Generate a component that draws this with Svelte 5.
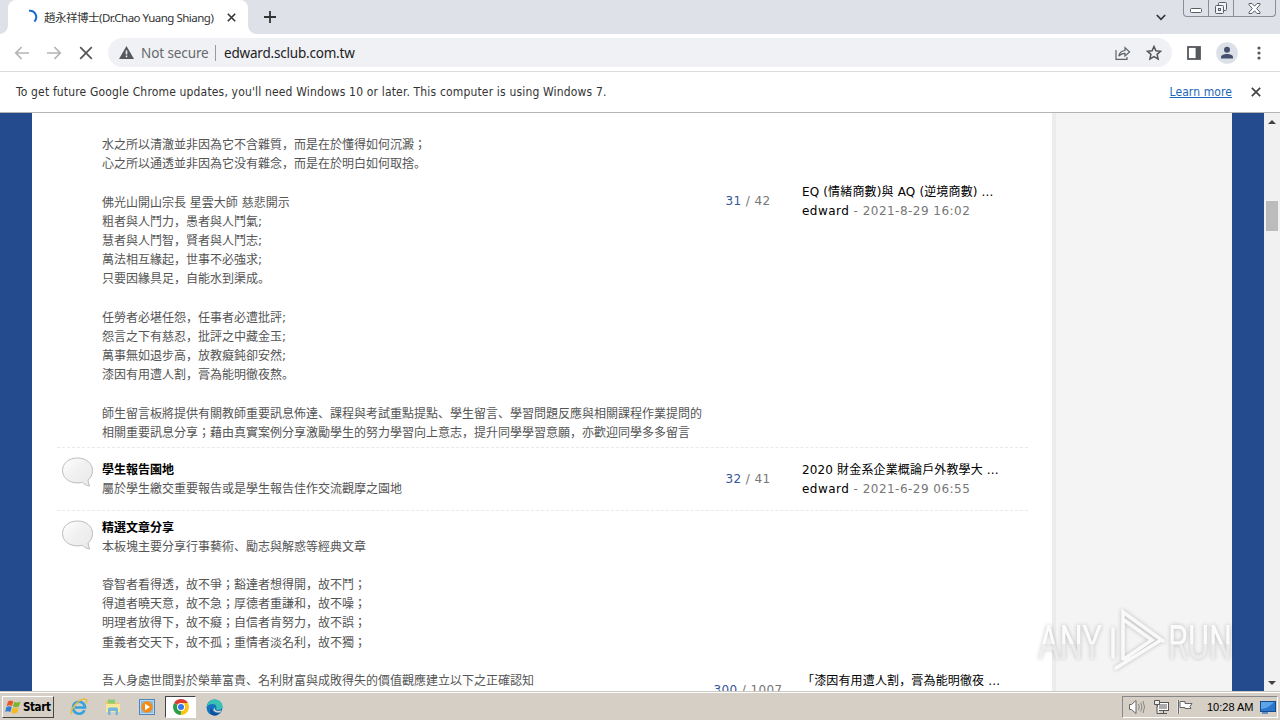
<script>
  const quote = [
    '水之所以清澈並非因為它不含雜質，而是在於懂得如何沉澱；',
    '心之所以通透並非因為它没有雜念，而是在於明白如何取捨。',
    '',
    '佛光山開山宗長 星雲大師 慈悲開示',
    '粗者與人鬥力，愚者與人鬥氣;',
    '慧者與人鬥智，賢者與人鬥志;',
    '萬法相互緣起，世事不必強求;',
    '只要因緣具足，自能水到渠成。',
    '',
    '任勞者必堪任怨，任事者必遭批評;',
    '怨言之下有慈忍，批評之中藏金玉;',
    '萬事無如退步高，放教癡鈍卻安然;',
    '漆因有用遭人割，膏為能明徹夜熬。',
    '',
    '師生留言板將提供有關教師重要訊息佈達、課程與考試重點提點、學生留言、學習問題反應與相關課程作業提問的',
    '相關重要訊息分享；藉由真實案例分享激勵學生的努力學習向上意志，提升同學學習意願，亦歡迎同學多多留言'
  ];

  const forums = [
    {
      kind: 'first',
      title: '',
      lines: quote,
      topics: '31',
      posts: '42',
      last: 'EQ (情緒商數)與 AQ (逆境商數) ...',
      user: 'edward',
      date: '2021-8-29 16:02'
    },
    {
      kind: 'short',
      title: '學生報告園地',
      lines: ['屬於學生繳交重要報告或是學生報告佳作交流觀摩之園地'],
      topics: '32',
      posts: '41',
      last: '2020 財金系企業概論戶外教學大 ...',
      user: 'edward',
      date: '2021-6-29 06:55'
    },
    {
      kind: 'long',
      title: '精選文章分享',
      lines: [
        '本板塊主要分享行事藝術、勵志與解惑等經典文章',
        '',
        '睿智者看得透，故不爭；豁達者想得開，故不鬥；',
        '得道者曉天意，故不急；厚德者重謙和，故不噪；',
        '明理者放得下，故不癡；自信者肯努力，故不誤；',
        '重義者交天下，故不孤；重情者淡名利，故不獨；',
        '',
        '吾人身處世間對於榮華富貴、名利財富與成敗得失的價值觀應建立以下之正確認知'
      ],
      topics: '300',
      posts: '1007',
      last: '「漆因有用遭人割，膏為能明徹夜 ...',
      user: '',
      date: ''
    }
  ];
</script>

<div class="screen">
  <header class="tabs">
    <div class="tab">
      <svg class="spinner" width="16" height="16" viewBox="0 0 16 16">
        <path d="M7 1.8A6.400 6.400 0 0 1 12.400 12.600" fill="none" stroke="#1a6bd0" stroke-width="2" />
      </svg>
      <span class="tab-title">趙永祥博士(Dr.Chao Yuang Shiang)</span>
      <svg width="9" height="9" viewBox="0 0 9 9"><path d="M.8.8l7.4 7.4M8.2.8L.8 8.2" stroke="#333" stroke-width="1.6" /></svg>
    </div>
    <svg class="plus" width="12" height="12" viewBox="0 0 12 12"><path d="M6 0v12M0 6h12" stroke="#333" stroke-width="1.8" /></svg>
    <svg class="chevron" width="10" height="7" viewBox="0 0 10 7"><path d="M.8 1l4.2 4.3L9.2 1" fill="none" stroke="#333" stroke-width="1.7" /></svg>
    <div class="caption">
      <span class="min"><svg width="12" height="5" viewBox="0 0 12 5"><rect x=".5" y=".5" width="11" height="4" rx="1" fill="#fff" stroke="#595d66" /></svg></span>
      <span class="max">
        <svg width="14" height="14" viewBox="0 0 14 14" fill="#f1f3f6" stroke="#595d66">
          <rect x="4.5" y="1.5" width="8" height="8" rx="1" />
          <rect x="1.5" y="4.5" width="8" height="8" rx="1" />
          <rect x="4.5" y="7.5" width="2" height="2" />
        </svg>
      </span>
      <span class="shut">
        <svg width="13" height="11" viewBox="0 0 13 11"><path d="M1 .5h3l2.5 2.7L9 .5h3v1.3L8.6 5.5 12 9.2v1.3H9L6.5 7.8 4 10.5H1V9.2l3.4-3.7L1 1.8z" fill="#fff" stroke="#595d66" /></svg>
      </span>
    </div>
  </header>

  <div class="toolbar">
    <svg width="16" height="14" viewBox="0 0 16 14"><path d="M15 7H2M7.6 1L1.8 7l5.8 6" fill="none" stroke="#b4b4b6" stroke-width="1.7" /></svg>
    <svg width="16" height="14" viewBox="0 0 16 14"><path d="M1 7h13M8.4 1l5.8 6-5.8 6" fill="none" stroke="#b4b4b6" stroke-width="1.7" /></svg>
    <svg class="stop" width="14" height="14" viewBox="0 0 14 14"><path d="M1.2 1.2l11.6 11.6M12.8 1.2L1.2 12.8" stroke="#555" stroke-width="1.7" /></svg>
    <div class="omnibox">
      <svg width="15" height="13" viewBox="0 0 15 13"><path d="M7.5 0L15 13H0z" fill="#55585c" /><path d="M7.5 4.6v3.8M7.5 9.6v1.7" stroke="#eff1f4" stroke-width="1.6" /></svg>
      <span class="insecure">Not secure</span>
      <span class="divider"></span>
      <span class="address">edward.sclub.com.tw</span>
      <svg class="share" width="16" height="14" viewBox="0 0 16 14" fill="none" stroke="#5f6368" stroke-width="1.2">
        <path d="M1 4v9.3h11V11" />
        <path d="M3.8 10.2C4.4 6.6 6.5 4.7 10 4.5V1.6L14.6 6 10 10V7.3c-3 0-4.8.8-6.2 2.9z" />
      </svg>
      <svg width="16" height="16" viewBox="0 0 14 14"><path d="M7 1.3l1.7 3.8 4.1.4-3.1 2.7.9 4.1L7 10.2l-3.6 2.1.9-4.1L1.2 5.5l4.1-.4z" fill="none" stroke="#505357" stroke-width="1.300" /></svg>
    </div>
    <svg class="panel" width="14" height="14" viewBox="0 0 14 14"><rect x="1" y="1" width="12" height="12" fill="#fff" stroke="#55585c" stroke-width="1.8" /><path d="M8.6 1H13v12H8.6z" fill="#55585c" /></svg>
    <svg class="avatar" width="22" height="22" viewBox="0 0 22 22"><circle cx="11" cy="11" r="10.8" fill="#dce0e7" /><circle cx="11" cy="7.8" r="3" fill="#44516e" /><path d="M5 16.5v-1.4c0-2 3-3.1 6-3.1s6 1.1 6 3.1v1.4z" fill="#44516e" /></svg>
    <svg class="dots" width="4" height="14" viewBox="0 0 4 14" fill="#55585c"><circle cx="2" cy="2" r="1.6" /><circle cx="2" cy="7" r="1.6" /><circle cx="2" cy="12" r="1.6" /></svg>
  </div>

  <div class="infobar">
    <span class="notice">To get future Google Chrome updates, you'll need Windows 10 or later. This computer is using Windows 7.</span>
    <span class="learn">Learn more</span>
    <svg width="10" height="10" viewBox="0 0 10 10"><path d="M.8.8l8.4 8.4M9.2.8L.8 9.2" stroke="#444" stroke-width="1.7" /></svg>
  </div>

  <div class="viewport">
    <main>
      <div class="board">
        {#each forums as forum}
          <section class="forum {forum.kind}">
            <div class="icon">
              {#if forum.title}
                <svg width="34" height="31" viewBox="0 0 34 31">
                  <defs>
                    <linearGradient id={`bubble-${forum.kind}`} x1="0" y1="0" x2="1" y2="1">
                      <stop offset="0" stop-color="#fff" />
                      <stop offset=".45" stop-color="#f1f1f1" />
                      <stop offset="1" stop-color="#e9e9e9" />
                    </linearGradient>
                  </defs>
                  <path d="M16.500 1C25.500 1 31.500 6.500 31.500 13.500c0 4-1.700 7.300-4.500 9.500.2 2 .6 4 1.600 6-3-.5-5.400-1.600-7.100-3.700-1.600.4-3.200.6-5 .6C7.500 25.900 1.500 20.500 1.500 13.500S7.500 1 16.500 1z" fill={`url(#bubble-${forum.kind})`} stroke="#bcbcbc" />
                </svg>
              {/if}
            </div>
            <div class="body">
              {#if forum.title}<h2>{forum.title}</h2>{/if}
              {#each forum.lines as line}
                <p>{line}</p>
              {/each}
            </div>
            <div class="count"><a href="#topics">{forum.topics}</a> / {forum.posts}</div>
            <div class="last">
              <p class="subject">{forum.last}</p>
              <p>{#if forum.user}<b>{forum.user}</b> - {forum.date}{/if}</p>
            </div>
          </section>
        {/each}
      </div>
    </main>
    <aside></aside>
    <div class="scrollbar">
      <svg width="8" height="4" viewBox="0 0 8 4"><path d="M0 4l4-4 4 4z" fill="#404040" /></svg>
      <span class="thumb"></span>
      <svg class="down" width="8" height="4" viewBox="0 0 8 4"><path d="M0 0l4 4 4-4z" fill="#404040" /></svg>
    </div>
  </div>

  <footer class="taskbar">
    <div class="start">
      <svg width="17" height="16" viewBox="0 0 17 16">
        <path d="M3 2.500q2.500-2 5.200-.3L7 7Q4.300 5.500 1.700 7.200z" fill="#e9562a" />
        <path d="M9.200 2.700q3 1.700 6.300-.5L14 7.200q-3 2-6 .3z" fill="#7cb52c" />
        <path d="M1.400 8.200q2.800-1.700 5.300-.2L5.400 13Q2.700 11.500.2 13z" fill="#2f7fd0" />
        <path d="M7.700 8.500q3 1.700 6 0L12.300 13.500q-3 2-5.900 0z" fill="#f6b922" />
      </svg>
      <span>Start</span>
    </div>
    <div class="launch">
      <svg width="18" height="18" viewBox="0 0 18 18" fill="none">
        <path d="M14.500 12.200A6 6 0 1 1 15 9.500H5" stroke="#35a3df" stroke-width="2.6" />
        <path d="M2 16C-1 13 9-.5 15.500 1.200c2 .6 1.300 2.800.4 4" stroke="#eabb35" stroke-width="1.5" />
      </svg>
    </div>
    <div class="launch">
      <svg width="18" height="18" viewBox="0 0 18 18">
        <path d="M2 3h5l1.500 2H15v9H2z" fill="#e9c95f" />
        <path d="M4 1.500h7v4H4z" fill="#8ccc72" />
        <path d="M2 6h14v8H2z" fill="#f8e79b" />
        <path d="M4 17v-6q0-1.500 1.500-1.500h7Q14 9.500 14 11v6h-2.500v-4h-5v4z" fill="#74b7de" />
      </svg>
    </div>
    <div class="launch">
      <svg width="18" height="18" viewBox="0 0 18 18"><rect x="1.500" y="1.500" width="15" height="15" fill="#b9d9f2" stroke="#4d86bb" /><rect x="3" y="3" width="12" height="12" fill="#8cbce4" /><circle cx="9" cy="9" r="5.700" fill="#f28b17" /><path d="M7 5.800L12 9l-5 3.200z" fill="#fff" /></svg>
    </div>
    <div class="launch active">
      <svg width="16" height="16" viewBox="0 0 16 16">
        <path d="M8 8L1.100 4A8 8 0 0 1 14.900 4z" fill="#df3b2f" />
        <path d="M8 8V4h6.900A8 8 0 0 1 8 16z" fill="#fbc417" />
        <path d="M8 8L8 16A8 8 0 0 1 1.100 4z" fill="#2b9e4b" />
        <path d="M8 16l3.500-6" stroke="#fbc417" stroke-width="1.500" />
        <circle cx="8" cy="8" r="4" fill="#fff" /><circle cx="8" cy="8" r="3" fill="#3b78e7" />
      </svg>
    </div>
    <div class="launch">
      <svg width="17" height="17" viewBox="0 0 17 17">
        <circle cx="8.500" cy="8.500" r="8" fill="#1673bd" />
        <path d="M.8 8C1.500 3 5 .5 8.800.5c4.500 0 7.700 3.300 7.700 6.500 0 2.800-2 4-4.200 4-1.700 0-2.500-.6-2-1.400C11 8 10 5 6.800 5 4 5 1.800 6 .8 8z" fill="#36c2b4" />
        <path d="M5.500 8.500c0 4 3.500 6.500 8 5.500 0 0-2 2.800-5.500 2.500C4 16 3 11 5.500 8.500z" fill="#104f9b" />
        <path d="M9 8.500c-1 2.500 1.500 4 5 3.200l1.500-.4-1 2c-4 1-7.500-.8-7-3.300z" fill="#d5d0c8" />
      </svg>
    </div>
    <div class="tray">
      <svg width="18" height="16" viewBox="0 0 18 16" fill="none" stroke="#666"><path d="M1.500 5.500h2L8 1.500v13l-4.500-4h-2z" fill="#fff" /><path d="M10.500 5q1.500 3 0 6M12.700 3.500q2.500 4.500 0 9M15 2q3 6 0 12" stroke="#888" /></svg>
      <svg width="17" height="16" viewBox="0 0 17 16" stroke="#555"><rect x="4.500" y="3.500" width="11" height="8" fill="#fff" /><path d="M6 5h8v5H6z" fill="#aaa" stroke="none" /><path d="M7 14.500h7M10.500 12v2" /><path d="M1.500 1.500h5v4h-5zM4 6v8.500h3" fill="#eee" /></svg>
      <svg width="17" height="16" viewBox="0 0 17 16" stroke="#666"><path d="M1.500 1v14" stroke="#fff" stroke-width="3" /><path d="M1.500 1v14" stroke-width="1.300" /><path d="M3 2.500h5v2h7l-2 3 1 2H8v-1H3z" fill="#fff" /></svg>
      <time>10:28 AM</time>
      <svg class="desk" width="16" height="13" viewBox="0 0 16 13"><rect x=".5" y=".5" width="15" height="10" fill="#2b76cb" stroke="#174b8b" /><path d="M1 8q7 0 13-7H1z" fill="#5ba4e8" /><path d="M2 12h6" stroke="#387cc0" stroke-width="1.500" /></svg>
    </div>
  </footer>

  <svg class="watermark" width="210" height="72" viewBox="0 0 210 72">
    <defs>
      <linearGradient id="sheen" x1="0" y1="0" x2="0" y2="1">
        <stop offset=".52" stop-color="#fff" stop-opacity=".95" />
        <stop offset=".53" stop-color="#efefef" stop-opacity=".8" />
      </linearGradient>
    </defs>
    <g fill="url(#sheen)">
      <text x="8" y="54" textLength="64" lengthAdjust="spacingAndGlyphs">ANY</text>
      <text x="138" y="54" textLength="64" lengthAdjust="spacingAndGlyphs">RUN</text>
    </g>
    <path d="M83 52V24M93 54V7l40 29M86 63l45-28M94 15l28 20-28 19" fill="none" stroke="#fff" stroke-opacity=".9" stroke-width="3.500" stroke-linecap="round" />
  </svg>
</div>

<style>
  :global(body) {
    margin: 0;
    overflow: hidden;
  }

  .screen {
    position: relative;
    display: flex;
    flex-direction: column;
    width: 1280px;
    height: 720px;
    overflow: hidden;
    background: #fff;
    font-family: "DejaVu Sans Condensed", "DejaVu Sans", "Noto Sans CJK TC", sans-serif;
    font-size: 12px;
    color: #333;
  }
  svg {
    display: block;
    flex: none;
  }
  p, h2 {
    margin: 0;
  }

  /* browser chrome */
  .tabs {
    display: flex;
    height: 34px;
    flex: none;
    background: #dee1e8;
  }
  .tab {
    position: relative;
    display: flex;
    align-items: center;
    box-sizing: border-box;
    width: 240px;
    margin-left: 8px;
    padding: 0 12px 0 14px;
    border-radius: 8px 8px 0 0;
    background: #fff;
    /* flared feet of the active tab */
    &::before, &::after {
      content: '';
      position: absolute;
      bottom: 0;
      width: 8px;
      height: 8px;
    }
    &::before {
      left: -8px;
      background: radial-gradient(circle at 0 0, transparent 7.5px, #fff 8px);
    }
    &::after {
      right: -8px;
      background: radial-gradient(circle at 100% 0, transparent 7.5px, #fff 8px);
    }
  }
  .tab-title {
    width: 172px;
    margin: 0 11px 0 6px;
    white-space: nowrap;
    font-family: "Noto Sans", "Noto Sans CJK TC", sans-serif;
    font-size: 11.5px;
    letter-spacing: -0.5px;
  }
  .plus {
    margin: 11px 0 0 16px;
  }
  .chevron {
    margin: 14px 0 0 auto;
  }
  .caption {
    display: flex;
    box-sizing: border-box;
    width: 93px;
    height: 17px;
    margin: 0 4px 0 17px;
    border: 1px solid #888d96;
    border-top: 0;
    border-radius: 0 0 4px 4px;
    & span {
      display: flex;
      align-items: center;
      justify-content: center;
    }
  }
  .min {
    width: 24px;
    padding-top: 4px;
  }
  .max {
    width: 24px;
    border: solid #888d96;
    border-width: 0 1px;
  }
  .shut {
    flex: 1;
  }
  .toolbar {
    display: flex;
    align-items: center;
    gap: 16px;
    height: 37px;
    flex: none;
    padding-left: 14px;
    border-bottom: 1px solid #dcdcdc;
  }
  .stop {
    margin-left: 1px;
  }
  .omnibox {
    display: flex;
    align-items: center;
    box-sizing: border-box;
    width: 1064px;
    height: 29px;
    margin-left: -1px;
    padding: 0 10px 0 11px;
    border-radius: 15px;
    background: #eff1f4;
    font-family: "Noto Sans", sans-serif;
    font-size: 13.5px;
  }
  .insecure {
    width: 67px;
    margin-left: 7px;
    color: #66696d;
    letter-spacing: -0.1px;
    white-space: nowrap;
  }
  .divider {
    width: 1px;
    height: 16px;
    margin: 0 8px 0 7px;
    background: #999;
  }
  .address {
    color: #222;
    letter-spacing: -0.2px;
  }
  .share {
    margin: 0 15px 0 auto;
  }
  .panel {
    margin-left: -1px;
  }
  .avatar {
    margin-left: -1px;
  }
  .dots {
    margin-left: 3px;
  }
  .infobar {
    display: flex;
    align-items: center;
    height: 40px;
    flex: none;
    padding: 0 19px 0 16px;
    border-bottom: 1px solid #b4b4b4;
  }
  .notice {
    letter-spacing: 0.165px;
  }
  .learn {
    margin: 0 19px 0 auto;
    color: #1b67b8;
    letter-spacing: 0.1px;
    text-decoration: underline;
  }

  /* page */
  .viewport {
    display: flex;
    height: 578px;
    flex: none;
    overflow: hidden;
    background: #234b8e;
  }
  main {
    width: 1020px;
    margin-left: 32px;
    background: #fff;
  }
  aside {
    box-sizing: border-box;
    width: 180px;
    border-left: 4px solid #ececec;
    background: #f4f4f4;
  }
  .board {
    width: 971px;
    margin: -156px 0 0 25px;
    color: #555;
    font-family: "DejaVu Sans", "Noto Sans CJK JP", "Noto Sans CJK TC", sans-serif;
    line-height: 19.2px;
  }
  .forum {
    display: grid;
    grid-template-columns: 45px 611px 70px 1fr;
    align-items: center;
    box-sizing: border-box;
    border-bottom: 1px dashed #e9e9e9;
    white-space: nowrap;
    & p {
      height: 19.2px;
    }
  }
  .first {
    height: 491px;
    & .body {
      align-self: end;
      padding-bottom: 4px;
    }
  }
  .short {
    height: 63px;
    & .body, & .count, & .last {
      padding-top: 2px;
    }
  }
  .long {
    height: 360px;
    & .body {
      align-self: start;
      padding-top: 7.5px;
    }
    & .last {
      padding-top: 2px;
    }
  }
  .icon {
    align-self: start;
    padding: 9px 0 0 4px;
  }
  h2 {
    color: #000;
    font-size: 12px;
    font-weight: 700;
  }
  .count {
    justify-self: center;
    color: #777;
    letter-spacing: 0.4px;
    & a {
      color: #35569a;
      text-decoration: none;
    }
  }
  .last {
    padding-left: 19px;
    color: #777;
    letter-spacing: 0.47px;
    & .subject, & b {
      color: #000;
      font-weight: 400;
    }
    & .subject {
      letter-spacing: 0.15px;
    }
  }
  .scrollbar {
    display: flex;
    flex-direction: column;
    align-items: center;
    width: 16px;
    padding: 7px 0 6px;
    box-sizing: border-box;
    margin-left: 32px;
    background: #f1f1f1;
  }
  .thumb {
    width: 12px;
    height: 30px;
    margin-top: 77px;
    background: #bcbcbc;
  }
  .down {
    margin-top: auto;
  }

  /* taskbar */
  .taskbar {
    display: flex;
    align-items: center;
    height: 26px;
    flex: none;
    margin-top: 1px;
    padding: 1px 2px 0;
    border-top: 1px solid #fff;
    background: #d5cfc6;
    box-shadow: 0 -1px #cbc8c2;
    color: #000;
  }
  .start {
    display: flex;
    align-items: center;
    gap: 1px;
    box-sizing: border-box;
    width: 52px;
    height: 22px;
    margin-right: 9px;
    padding-left: 2px;
    border: 1px solid #fff;
    border-right-color: #444;
    border-bottom-color: #444;
    font: 700 11.5px "DejaVu Sans Condensed", sans-serif;
    letter-spacing: -0.4px;
  }
  .launch {
    display: flex;
    align-items: center;
    justify-content: center;
    box-sizing: border-box;
    width: 32px;
    height: 22px;
    margin-right: 2px;
  }
  .active {
    width: 31px;
    border: 1px solid #fff;
    border-top-color: #444;
    border-left-color: #444;
    background: #fff;
  }
  .tray {
    display: flex;
    align-items: center;
    gap: 7px;
    box-sizing: border-box;
    width: 156px;
    height: 22px;
    margin-left: auto;
    padding-left: 5px;
    border: 1px solid #fff;
    border-top-color: #888;
    border-left-color: #888;
    & time {
      margin-left: 6px;
      font: 11px "Liberation Sans", sans-serif;
      white-space: nowrap;
    }
  }

  .watermark {
    position: absolute;
    left: 1030px;
    top: 605px;
    filter: drop-shadow(0 0 2px rgba(0, 0, 0, 0.3));
    opacity: 0.85;
    & text {
      font: 400 49px Roboto, sans-serif;
    }
  }
</style>
